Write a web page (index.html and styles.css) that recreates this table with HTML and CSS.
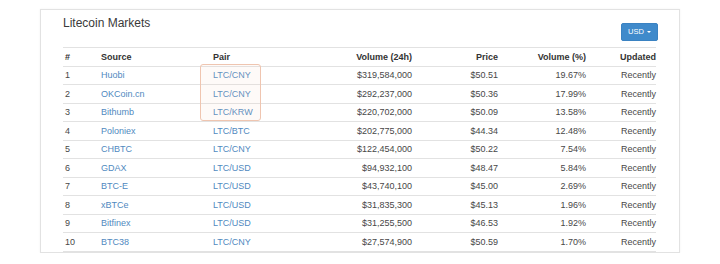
FILE: index.html
```html
<!DOCTYPE html>
<html>
<head>
<meta charset="utf-8">
<link rel="stylesheet" href="styles.css">
</head>
<body>
<div class="card">
  <div class="card-head">
    <h2 class="title">Litecoin Markets</h2>
    <button class="btn">USD <span class="caret"></span></button>
  </div>
  <div class="table-wrap">
    <table class="markets">
      <colgroup>
        <col class="c1"><col class="c2"><col class="c3"><col class="c4"><col class="c5"><col class="c6"><col class="c7">
      </colgroup>
      <thead>
        <tr><th>#</th><th>Source</th><th>Pair</th><th class="r">Volume (24h)</th><th class="r">Price</th><th class="r">Volume (%)</th><th class="r last">Updated</th></tr>
      </thead>
      <tbody>
        <tr><td>1</td><td><a>Huobi</a></td><td><a>LTC/CNY</a></td><td class="r">$319,584,000</td><td class="r">$50.51</td><td class="r">19.67%</td><td class="r last">Recently</td></tr>
        <tr><td>2</td><td><a>OKCoin.cn</a></td><td><a>LTC/CNY</a></td><td class="r">$292,237,000</td><td class="r">$50.36</td><td class="r">17.99%</td><td class="r last">Recently</td></tr>
        <tr><td>3</td><td><a>Bithumb</a></td><td><a>LTC/KRW</a></td><td class="r">$220,702,000</td><td class="r">$50.09</td><td class="r">13.58%</td><td class="r last">Recently</td></tr>
        <tr><td>4</td><td><a>Poloniex</a></td><td><a>LTC/BTC</a></td><td class="r">$202,775,000</td><td class="r">$44.34</td><td class="r">12.48%</td><td class="r last">Recently</td></tr>
        <tr><td>5</td><td><a>CHBTC</a></td><td><a>LTC/CNY</a></td><td class="r">$122,454,000</td><td class="r">$50.22</td><td class="r">7.54%</td><td class="r last">Recently</td></tr>
        <tr><td>6</td><td><a>GDAX</a></td><td><a>LTC/USD</a></td><td class="r">$94,932,100</td><td class="r">$48.47</td><td class="r">5.84%</td><td class="r last">Recently</td></tr>
        <tr><td>7</td><td><a>BTC-E</a></td><td><a>LTC/USD</a></td><td class="r">$43,740,100</td><td class="r">$45.00</td><td class="r">2.69%</td><td class="r last">Recently</td></tr>
        <tr><td>8</td><td><a>xBTCe</a></td><td><a>LTC/USD</a></td><td class="r">$31,835,300</td><td class="r">$45.13</td><td class="r">1.96%</td><td class="r last">Recently</td></tr>
        <tr><td>9</td><td><a>Bitfinex</a></td><td><a>LTC/USD</a></td><td class="r">$31,255,500</td><td class="r">$46.53</td><td class="r">1.92%</td><td class="r last">Recently</td></tr>
        <tr><td>10</td><td><a>BTC38</a></td><td><a>LTC/CNY</a></td><td class="r">$27,574,900</td><td class="r">$50.59</td><td class="r">1.70%</td><td class="r last">Recently</td></tr>
      </tbody>
    </table>
    <div class="highlight"></div>
  </div>
</div>
</body>
</html>
```
FILE: styles.css
```css
html, body {
  margin: 0;
  padding: 0;
  background: #fff;
}
body {
  font-family: "Liberation Sans", Arial, sans-serif;
  color: #333;
}
.card {
  margin: 9px 0 0 40px;
  width: 640px;
  height: 244px;
  box-sizing: border-box;
  border: 1px solid #e2e2e2;
  box-shadow: 0 0 2px rgba(0,0,0,0.06);
  padding: 6px 23px 0 22px;
}
.card-head {
  display: flex;
  justify-content: space-between;
  align-items: flex-start;
  height: 25px;
}
.title {
  margin: 0;
  font-size: 12px;
  line-height: 14px;
  font-weight: normal;
  color: #3a3a3a;
}
.btn {
  margin-top: 7px;
  margin-right: -2px;
  width: 37px;
  height: 18px;
  padding: 0;
  border: 1px solid #3a82c2;
  border-radius: 2px;
  background: #3f8acb;
  color: #fff;
  font-family: "Liberation Sans", Arial, sans-serif;
  font-size: 7.5px;
  line-height: 16px;
  display: flex;
  align-items: center;
  justify-content: center;
  gap: 3px;
}
.caret {
  width: 0;
  height: 0;
  border-left: 2px solid transparent;
  border-right: 2px solid transparent;
  border-top: 2px solid #fff;
}
.table-wrap {
  position: relative;
  margin-top: 6px;
}
.markets {
  width: 593px;
  table-layout: fixed;
  border-collapse: collapse;
  font-size: 9px;
}
.c1 { width: 36px; }
.c2 { width: 112px; }
.c3 { width: 119px; }
.c4 { width: 84px; }
.c5 { width: 86px; }
.c6 { width: 88px; }
.c7 { width: 68px; }
.markets tr {
  height: 18.5px;
  border-top: 1px solid #e2e2e2;
}
.markets tbody tr:last-child {
  border-bottom: 1px solid #e2e2e2;
}
.markets th, .markets td {
  padding: 0 2px;
  text-align: left;
  vertical-align: middle;
  white-space: nowrap;
}
.markets th {
  font-weight: bold;
  color: #333;
}
.markets td {
  color: #474747;
}
.markets .r { text-align: right; }
.markets .last { padding-right: 0; }
.markets a {
  color: #5089c0;
  text-decoration: none;
}
.highlight {
  position: absolute;
  left: 137px;
  top: 17px;
  width: 61px;
  height: 57px;
  box-sizing: border-box;
  border: 1px solid #efc5b0;
  border-radius: 3px;
  background: rgba(245, 215, 195, 0.12);
  pointer-events: none;
}
```
